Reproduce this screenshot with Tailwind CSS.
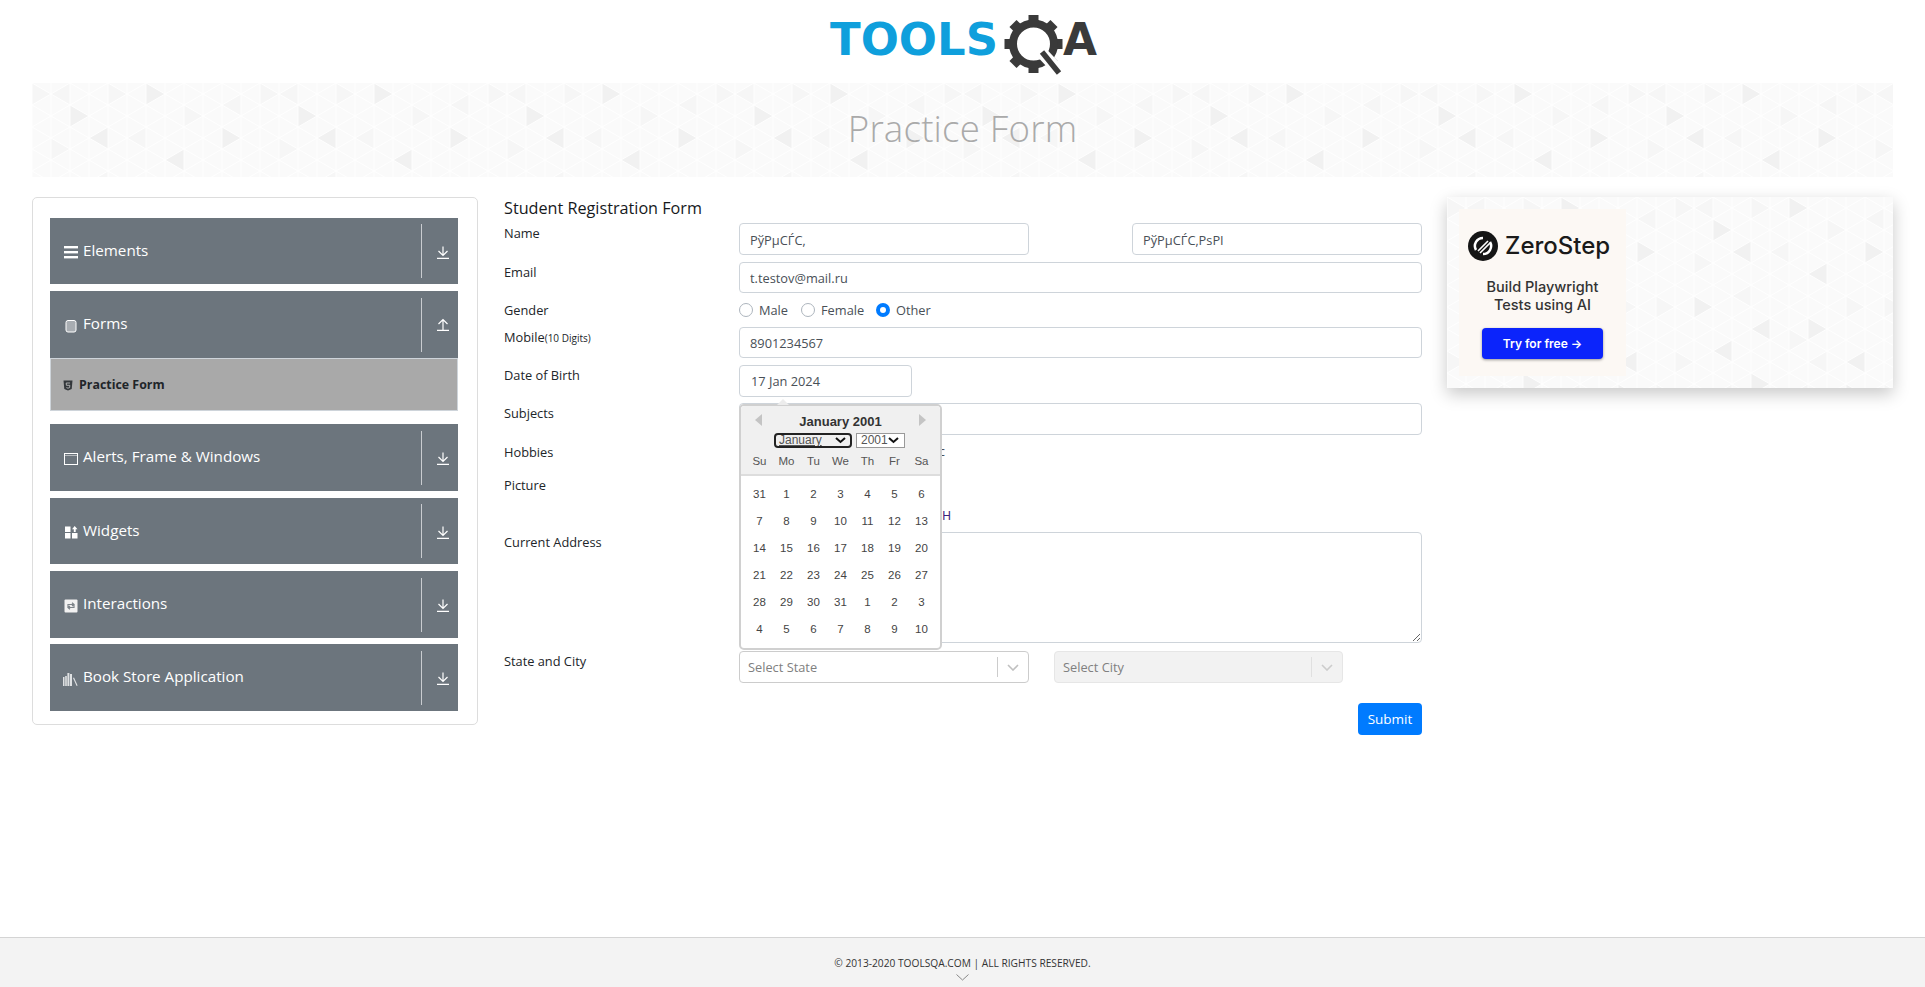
<!DOCTYPE html>
<html lang="en">
<head>
<meta charset="UTF-8">
<title>ToolsQA</title>
<script src="https://cdn.jsdelivr.net/npm/@tailwindcss/browser@4"></script>
</head>
<body class="bg-white text-[#212529] [font-family:'Open_Sans',sans-serif]">
<div class="flex flex-col h-[987px] w-[1925px] overflow-hidden">

	<!-- logo -->
	<header class="h-[83px] pt-[10px] pl-[825px] shrink-0">
		<svg width="280" height="70" viewBox="0 0 280 70">
			<text x="5" y="45" textLength="168" lengthAdjust="spacingAndGlyphs" font-family="DejaVu Sans" font-weight="700" font-size="45" fill="#0f9fdc">TOOLS</text>
			<g fill="#3a3a3a">
				<rect x="203.5" y="5" width="10" height="8" />
				<rect x="203.5" y="5" width="10" height="8" transform="rotate(45 208.5 34)" />
				<rect x="203.5" y="5" width="10" height="8" transform="rotate(90 208.5 34)" />
				<rect x="203.5" y="5" width="10" height="8" transform="rotate(135 208.5 34)" />
				<rect x="203.5" y="5" width="10" height="8" transform="rotate(180 208.5 34)" />
				<rect x="203.5" y="5" width="10" height="8" transform="rotate(225 208.5 34)" />
				<rect x="203.5" y="5" width="10" height="8" transform="rotate(270 208.5 34)" />
				<rect x="203.5" y="5" width="10" height="8" transform="rotate(315 208.5 34)" />
			</g>
			<circle cx="208.5" cy="34" r="20.5" fill="none" stroke="#3a3a3a" stroke-width="8" />
			<path d="M218 44 L234 61" stroke="#fff" stroke-width="12" />
			<path d="M217 42 L234 63" stroke="#3a3a3a" stroke-width="5.5" />
			<text x="238" y="45" textLength="34" lengthAdjust="spacingAndGlyphs" font-family="DejaVu Sans" font-weight="700" font-size="45" fill="#3a3a3a">A</text>
		</svg>
	</header>

	<!-- banner -->
	<div class="relative mx-[32px] h-[94px] shrink-0 flex items-center justify-center">
		<svg class="absolute inset-0" width="100%" height="100%">
			<defs>
				<pattern id="lines" width="38" height="44" patternUnits="userSpaceOnUse">
					<path d="M0 0V44M19 0V44M38 0V44M0 0L38 22M38 0L0 22M0 22L38 44M38 22L0 44" stroke="#fff" stroke-width="0.9" fill="none" />
				</pattern>
				<pattern id="tile" width="228" height="264" patternUnits="userSpaceOnUse">
					<rect width="228" height="264" fill="#fafafa" />
					<g fill="#f6f6f6">
						<polygon points="0,0 0,22 19,11" />
						<polygon points="38,0 38,22 19,11" />
						<polygon points="76,0 76,22 95,11" />
						<polygon points="152,22 152,44 171,33" />
						<polygon points="209,11 209,33 190,22" />
						<polygon points="19,55 19,77 38,66" />
						<polygon points="114,44 114,66 95,55" />
						<polygon points="76,88 76,110 57,99" />
						<polygon points="171,99 171,121 190,110" />
						<polygon points="209,99 209,121 228,110" />
						<polygon points="114,132 114,154 133,143" />
						<polygon points="0,154 0,176 19,165" />
						<polygon points="152,154 152,176 133,165" />
						<polygon points="57,187 57,209 38,198" />
						<polygon points="133,187 133,209 114,198" />
						<polygon points="209,187 209,209 228,198" />
						<polygon points="95,231 95,253 76,242" />
						<polygon points="19,231 19,253 0,242" />
					</g>
					<g fill="#f1f1f1">
						<polygon points="38,22 38,44 57,33" />
						<polygon points="76,44 76,66 57,55" />
						<polygon points="114,0 114,22 133,11" />
						<polygon points="152,66 152,88 133,77" />
						<polygon points="190,44 190,66 209,55" />
						<polygon points="19,99 19,121 38,110" />
						<polygon points="95,121 95,143 76,132" />
						<polygon points="57,143 57,165 38,154" />
						<polygon points="133,121 133,143 152,132" />
						<polygon points="76,176 76,198 95,187" />
						<polygon points="190,154 190,176 171,165" />
						<polygon points="171,187 171,209 190,198" />
						<polygon points="38,220 38,242 19,231" />
						<polygon points="133,231 133,253 114,242" />
						<polygon points="209,231 209,253 228,242" />
						<polygon points="152,220 152,242 171,231" />
					</g>
					<rect width="228" height="264" fill="url(#lines)" />
				</pattern>
			</defs>
			<rect width="100%" height="100%" fill="url(#tile)" />
		</svg>
		<h1 class="relative pb-[2px] text-[36.7px] font-light text-[#aaaaaa] tracking-[0.2px]">Practice Form</h1>
	</div>

	<main class="flex items-start px-[32px] pt-[20px]">

		<!-- sidebar -->
		<aside class="w-[446px] h-[528px] shrink-0 border border-[#dddddd] rounded-[5px] pt-[20px] pl-[17px] pr-[19px] text-[15.2px] text-white">
			<div class="h-[66px] bg-[#6c757d] flex items-center pl-[14px]">
				<svg class="w-[14px] h-[14px] mt-[2px] mr-[5px] shrink-0" viewBox="0 0 14 14" fill="#fff"><rect y="1" width="14" height="2.4" /><rect y="6" width="14" height="2.4" /><rect y="11" width="14" height="2.4" /></svg>
				<span class="flex-1 pb-[2px]">Elements</span>
				<span class="w-px h-[54px] bg-[#c9ccd0]"></span>
				<svg class="w-[12px] h-[13px] ml-[15px] mr-[9px] mt-[2px]" viewBox="0 0 12 13" fill="none" stroke="#fff" stroke-width="1.2"><path d="M6 0.5V9M1.5 5L6 9.5L10.5 5M0 12.3H12" /></svg>
			</div>
			<div class="mt-[7px] h-[67px] bg-[#6c757d] flex items-center pl-[14px]">
				<svg class="w-[14px] h-[14px] mt-[2px] mr-[5px] shrink-0" viewBox="0 0 14 14"><rect x="2" y="1.5" width="10" height="11.5" rx="2" fill="#a8adb2" stroke="#fff" /></svg>
				<span class="flex-1 pb-[2px]">Forms</span>
				<span class="w-px h-[54px] bg-[#c9ccd0]"></span>
				<svg class="w-[12px] h-[13px] ml-[15px] mr-[9px]" viewBox="0 0 12 13" fill="none" stroke="#fff" stroke-width="1.2"><path d="M6 2V12M1.5 6L6 1.5L10.5 6M0 12.3H12" /></svg>
			</div>
			<div class="h-[53px] pt-px bg-[#a9a9a9] border border-[#ced4da] flex items-center pl-[12px] text-[12.4px] font-bold text-[#212529]">
				<svg class="w-[10px] h-[11px] mr-[6px] shrink-0" viewBox="0 0 10 11"><path d="M0.5 0.5H9.5L8.7 9L5 10.5L1.3 9Z" fill="#33373b" /><path d="M7 3H3.2L3.4 5.3H6.8L6.6 7.6L5 8.2L3.4 7.6" fill="none" stroke="#c8c8c8" stroke-width="0.8" /></svg>
				Practice Form
			</div>
			<div class="mt-[13px] h-[67px] bg-[#6c757d] flex items-center pl-[14px]">
				<svg class="w-[14px] h-[14px] mt-[2px] mr-[5px] shrink-0" viewBox="0 0 14 14" fill="none" stroke="#fff"><rect x="0.5" y="1.5" width="13" height="11" /><path d="M0.5 3.5H13.5" stroke-dasharray="1 1" /></svg>
				<span class="flex-1 pb-[2px]">Alerts, Frame &amp; Windows</span>
				<span class="w-px h-[54px] bg-[#c9ccd0]"></span>
				<svg class="w-[12px] h-[13px] ml-[15px] mr-[9px] mt-[2px]" viewBox="0 0 12 13" fill="none" stroke="#fff" stroke-width="1.2"><path d="M6 0.5V9M1.5 5L6 9.5L10.5 5M0 12.3H12" /></svg>
			</div>
			<div class="mt-[7px] h-[66px] bg-[#6c757d] flex items-center pl-[14px]">
				<svg class="w-[14px] h-[14px] mt-[2px] mr-[5px] shrink-0" viewBox="0 0 14 14" fill="#fff"><rect x="1" y="1.5" width="5.5" height="5.5" /><rect x="1" y="8" width="5.5" height="5.5" /><rect x="8" y="8" width="5.5" height="5.5" /><path d="M10.7 1L13.5 4.2H11.7V7H9.8V4.2H8Z" /></svg>
				<span class="flex-1 pb-[2px]">Widgets</span>
				<span class="w-px h-[54px] bg-[#c9ccd0]"></span>
				<svg class="w-[12px] h-[13px] ml-[15px] mr-[9px] mt-[2px]" viewBox="0 0 12 13" fill="none" stroke="#fff" stroke-width="1.2"><path d="M6 0.5V9M1.5 5L6 9.5L10.5 5M0 12.3H12" /></svg>
			</div>
			<div class="mt-[7px] h-[67px] bg-[#6c757d] flex items-center pl-[14px]">
				<svg class="w-[14px] h-[14px] mt-[2px] mr-[5px] shrink-0" viewBox="0 0 14 14"><rect x="0.5" y="0.5" width="13" height="13" rx="1" fill="#f2f2f2" /><path d="M4 8V5.5H9M8 3.8L10 5.5L8 7M10 6V8.5H5M6 10.2L4 8.5L6 7" fill="none" stroke="#7d848a" stroke-width="1.2" /></svg>
				<span class="flex-1 pb-[2px]">Interactions</span>
				<span class="w-px h-[54px] bg-[#c9ccd0]"></span>
				<svg class="w-[12px] h-[13px] ml-[15px] mr-[9px] mt-[2px]" viewBox="0 0 12 13" fill="none" stroke="#fff" stroke-width="1.2"><path d="M6 0.5V9M1.5 5L6 9.5L10.5 5M0 12.3H12" /></svg>
			</div>
			<div class="mt-[6px] h-[67px] bg-[#6c757d] flex items-center pl-[13px]">
				<svg class="w-[15px] h-[14px] mt-[2px] mr-[5px] shrink-0" viewBox="0 0 15 14" fill="#dfe1e3"><rect x="0" y="5" width="1.5" height="9" /><rect x="2.2" y="4" width="1.6" height="10" /><rect x="4.4" y="1" width="2" height="13" /><rect x="7" y="2" width="2" height="12" /><path d="M10 6L11 5.6L14.6 13.6L13.6 14Z" /></svg>
				<span class="flex-1 pb-[2px]">Book Store Application</span>
				<span class="w-px h-[54px] bg-[#c9ccd0]"></span>
				<svg class="w-[12px] h-[13px] ml-[15px] mr-[9px] mt-[2px]" viewBox="0 0 12 13" fill="none" stroke="#fff" stroke-width="1.2"><path d="M6 0.5V9M1.5 5L6 9.5L10.5 5M0 12.3H12" /></svg>
			</div>
		</aside>

		<!-- form -->
		<form class="w-[918px] ml-[26px] shrink-0 text-[12.8px] leading-[20px]">
			<h5 class="text-[16.2px] font-medium text-[#16191c] leading-[22px] h-[26px]">Student Registration Form</h5>

			<div class="h-[39px] flex">
				<label class="w-[235px]">Name</label>
				<input value="РўРµСЃС‚" class="w-[290px] h-[32px] pt-px px-[10px] text-[#495057] border border-[#ced4da] rounded-[4px]">
				<input value="РўРµСЃС‚РѕРІ" class="w-[290px] h-[32px] ml-[103px] pt-px px-[10px] text-[#495057] border border-[#ced4da] rounded-[4px]">
			</div>
			<div class="h-[37px] flex">
				<label class="w-[235px]">Email</label>
				<input value="t.testov@mail.ru" class="w-[683px] h-[31px] px-[10px] text-[#495057] border border-[#ced4da] rounded-[4px]">
			</div>
			<div class="h-[28px] flex">
				<label class="w-[235px] pt-px">Gender</label>
				<div class="flex items-center h-[22px] text-[#495057]">
					<span class="w-[14px] h-[14px] rounded-full border border-[#adb5bd]"></span><span class="ml-[6px] w-[42px]">Male</span>
					<span class="w-[14px] h-[14px] rounded-full border border-[#adb5bd]"></span><span class="ml-[6px] w-[55px]">Female</span>
					<span class="w-[14px] h-[14px] rounded-full bg-[#007bff] flex items-center justify-center"><span class="w-[6px] h-[6px] rounded-full bg-white"></span></span><span class="ml-[6px]">Other</span>
				</div>
			</div>
			<div class="h-[38px] flex">
				<label class="w-[235px]">Mobile<span class="text-[10px]">(10 Digits)</span></label>
				<input value="8901234567" class="w-[683px] h-[31px] px-[10px] text-[#495057] border border-[#ced4da] rounded-[4px]">
			</div>
			<div class="h-[38px] flex">
				<label class="w-[235px]">Date of Birth</label>
				<div class="relative w-[683px]">
					<input value="17 Jan 2024" class="w-[173px] h-[32px] px-[11px] text-[#495057] border border-[#ced4da] rounded-[4px]">

					<!-- date picker -->
					<div class="absolute z-10 left-0 top-[39px] w-[203px] h-[246px] bg-white border-2 border-[#d0d0d0] rounded-[5px] text-[#333333] [font-family:'Liberation_Sans',sans-serif]">
						<span class="absolute left-[36px] -top-[7px] w-0 h-0 border-x-[6px] border-x-transparent border-b-[6px] border-b-[#ececec]"></span>
						<div class="relative h-[70px] bg-[#f0f0f0] border-b-2 border-[#dddddd] rounded-t-[4px]">
							<span class="absolute left-[14px] top-[8px] w-0 h-0 border-y-[6px] border-y-transparent border-r-[7px] border-r-[#c4c4c4]"></span>
							<span class="absolute right-[14px] top-[8px] w-0 h-0 border-y-[6px] border-y-transparent border-l-[7px] border-l-[#c4c4c4]"></span>
							<div class="pt-[7px] text-center text-[13px] leading-[18px] font-bold">January 2001</div>
							<div class="flex ml-[33px] mt-[2px] h-[15px] text-[12px] text-[#555555] leading-[13px]">
								<div class="w-[78px] h-[15px] flex items-center justify-between pl-[3px] pr-[4px] border-2 border-[#222222] rounded-[4px] underline overflow-hidden">January<svg class="w-[11px] h-[7px]" viewBox="0 0 11 7" fill="none" stroke="#111" stroke-width="2"><path d="M1 1L5.5 5L10 1" /></svg></div>
								<div class="w-[49px] h-[15px] ml-[4px] flex items-center justify-between pl-[4px] pr-[5px] border border-[#999999] bg-white">2001<svg class="w-[11px] h-[7px]" viewBox="0 0 11 7" fill="none" stroke="#111" stroke-width="2"><path d="M1 1L5.5 5L10 1" /></svg></div>
							</div>
							<div class="grid grid-cols-[repeat(7,27px)] ml-[5px] mt-[6px] text-center text-[11.5px] leading-[14px] text-[#555555]">
								<span>Su</span><span>Mo</span><span>Tu</span><span>We</span><span>Th</span><span>Fr</span><span>Sa</span>
							</div>
						</div>
						<div class="grid grid-cols-[repeat(7,27px)] auto-rows-[27px] ml-[5px] mt-[4px] items-center text-center text-[11.5px] text-[#444444]">
							<span>31</span><span>1</span><span>2</span><span>3</span><span>4</span><span>5</span><span>6</span>
							<span>7</span><span>8</span><span>9</span><span>10</span><span>11</span><span>12</span><span>13</span>
							<span>14</span><span>15</span><span>16</span><span>17</span><span>18</span><span>19</span><span>20</span>
							<span>21</span><span>22</span><span>23</span><span>24</span><span>25</span><span>26</span><span>27</span>
							<span>28</span><span>29</span><span>30</span><span>31</span><span>1</span><span>2</span><span>3</span>
							<span>4</span><span>5</span><span>6</span><span>7</span><span>8</span><span>9</span><span>10</span>
						</div>
					</div>
				</div>
			</div>
			<div class="h-[38px] flex">
				<label class="w-[235px]">Subjects</label>
				<div class="w-[683px] h-[32px] border border-[#ced4da] rounded-[4px]"></div>
			</div>
			<div class="h-[28px] flex">
				<label class="w-[235px] pt-px">Hobbies</label>
				<div class="flex items-start h-[22px] w-[206px] text-[#495057]">
					<span class="w-[14px] h-[14px] mt-[3px] border border-[#adb5bd] rounded-[3px]"></span>
					<span class="ml-auto">Music</span>
				</div>
			</div>
			<div class="h-[63px] flex">
				<label class="w-[235px] pt-[6px]">Picture</label>
				<div class="pt-[33px] flex items-center h-[57px] w-[212px] whitespace-nowrap text-[12px] [font-family:'Liberation_Sans',sans-serif] text-[#3b1f7a]">
					<span class="w-[5px] h-[24px] border-l-2 border-[#767676]"></span>
					<span class="ml-auto mt-[3px]">Н</span>
				</div>
			</div>
			<div class="h-[119px] flex">
				<label class="w-[235px]">Current Address</label>
				<textarea class="w-[683px] h-[111px] px-[11px] py-[6px] border border-[#ced4da] rounded-[4px]"></textarea>
			</div>
			<div class="h-[52px] flex">
				<label class="w-[235px]">State and City</label>
				<div class="w-[290px] h-[32px] flex items-center pl-[8px] text-[#808080] bg-white border border-[#cccccc] rounded-[4px]">
					<span class="flex-1">Select State</span>
					<span class="w-px h-[20px] bg-[#cccccc]"></span>
					<svg class="w-[12px] h-[7px] mx-[9px]" viewBox="0 0 12 7" fill="none" stroke="#c0c0c0" stroke-width="1.6"><path d="M1 1L6 6L11 1" /></svg>
				</div>
				<div class="w-[289px] h-[32px] ml-[25px] flex items-center pl-[8px] text-[#808080] bg-[#f2f2f2] border border-[#e6e6e6] rounded-[4px]">
					<span class="flex-1">Select City</span>
					<span class="w-px h-[20px] bg-[#e0e0e0]"></span>
					<svg class="w-[12px] h-[7px] mx-[9px]" viewBox="0 0 12 7" fill="none" stroke="#cccccc" stroke-width="1.6"><path d="M1 1L6 6L11 1" /></svg>
				</div>
			</div>
			<div class="flex justify-end">
				<button type="button" class="w-[64px] h-[32px] bg-[#007bff] text-white text-[13.5px] rounded-[4px]">Submit</button>
			</div>
		</form>

		<!-- ad -->
		<div class="relative w-[446px] h-[191px] ml-[25px] shrink-0 shadow-[0_6px_16px_rgba(0,0,0,0.22)] [font-family:Inter,sans-serif]">
			<svg class="absolute inset-0" width="100%" height="100%"><rect width="100%" height="100%" fill="url(#tile)" /></svg>
			<div class="absolute left-[12px] top-[12px] w-[167px] h-[167px] bg-[#fcf8f4] flex flex-col items-center">
				<div class="flex items-center self-start ml-[9px] mt-[22px] h-[30px] text-[24px] font-medium text-[#1a1a1a]">
					<svg class="w-[30px] h-[30px] mr-[7px]" viewBox="0 0 30 30"><circle cx="15" cy="15" r="15" fill="#151515" /><path d="M15 7A8 8 0 0 0 8 19M15 23A8 8 0 0 0 22 11" fill="none" stroke="#fff" stroke-width="2.5" /><path d="M10 20L20 10M12 22L22 12" stroke="#fff" stroke-width="1.6" /></svg>
					ZeroStep
				</div>
				<div class="mt-[17px] text-center text-[14.5px] leading-[17.5px] font-medium text-[#333333]">Build Playwright<br>Tests using AI</div>
				<div class="mt-[15px] w-[121px] h-[31px] flex items-center justify-center bg-[#0b24fb] rounded-[4px] text-white text-[12px] font-semibold shadow-[0_1px_3px_rgba(0,0,0,0.4)]">Try for free →</div>
			</div>
		</div>
	</main>

	<!-- footer -->
	<footer class="mt-auto h-[50px] shrink-0 bg-[#f3f3f3] border-t border-[#d4d4d4] flex flex-col items-center pt-[17px] text-[10.2px] leading-[16px] text-[#333333]">
		<span>© 2013-2020 TOOLSQA.COM | ALL RIGHTS RESERVED.</span>
		<svg class="w-[13px] h-[7px] mt-[3px]" viewBox="0 0 13 7" fill="none" stroke="#888888"><path d="M0.5 0.5L6.5 6L12.5 0.5" /></svg>
	</footer>
</div>
</body>
</html>
